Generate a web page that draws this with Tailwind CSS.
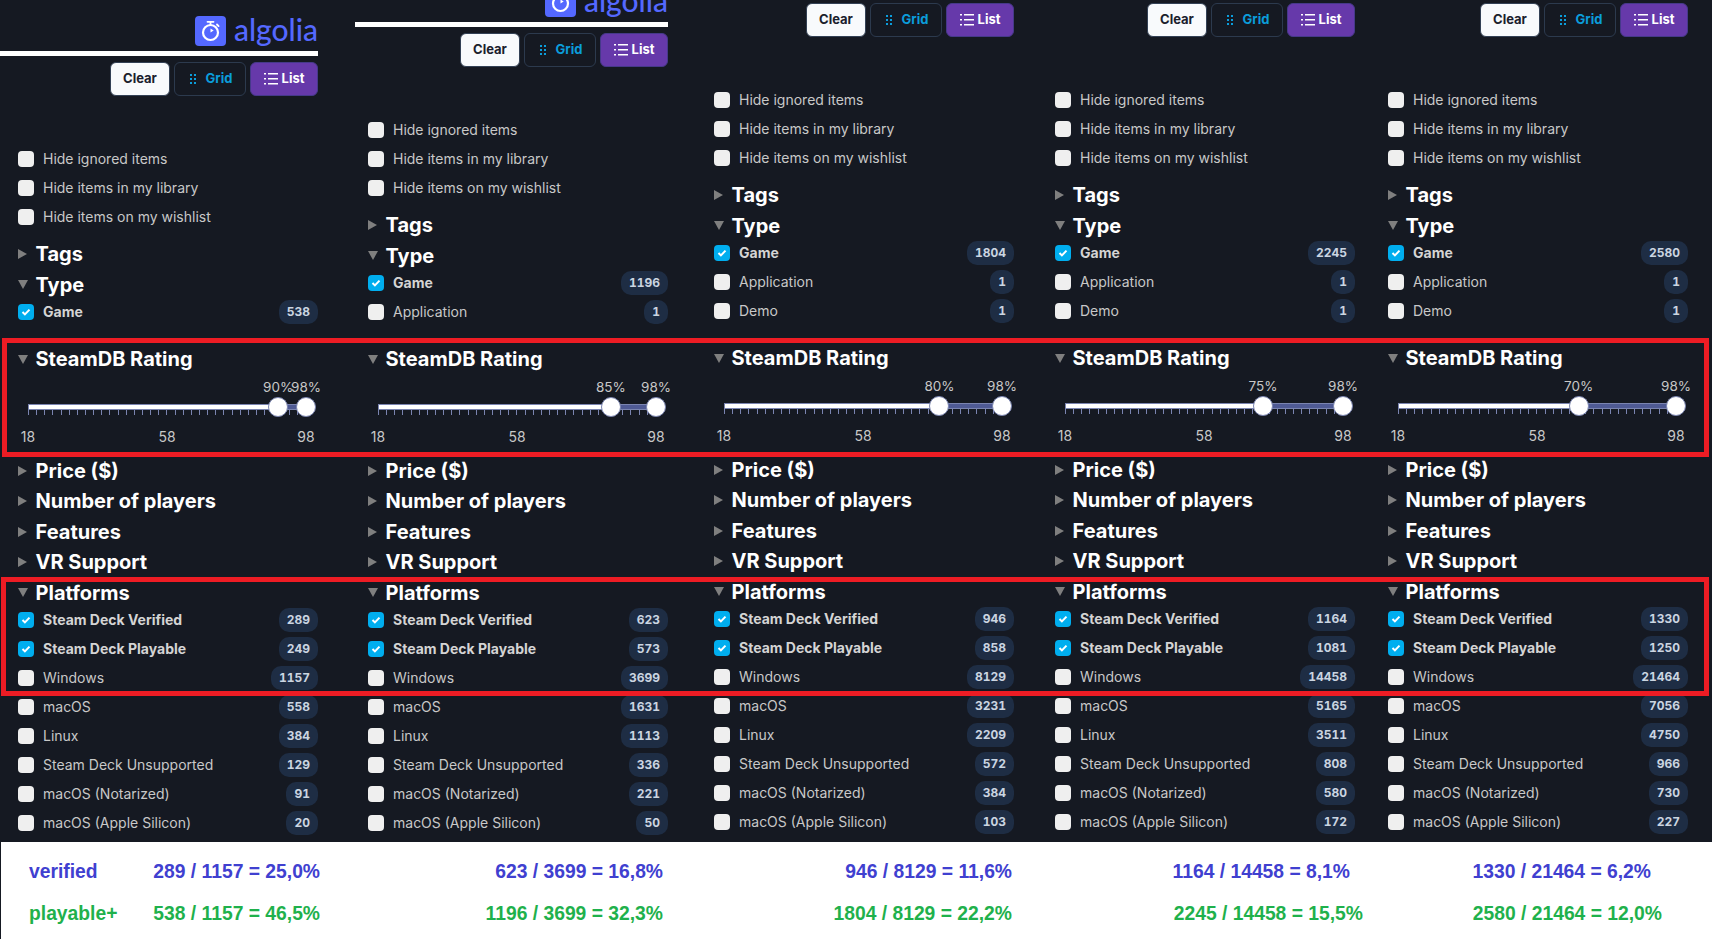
<!DOCTYPE html>
<html lang="en">
<head>
    <meta charset="UTF-8">
    <title>SteamDB filters</title>
    <script src="https://cdn.jsdelivr.net/npm/@tailwindcss/browser@4"></script>
</head>
<body class="bg-[#151922] [font-family:Inter,sans-serif]">
    <div class="relative w-[1712px] h-[939px] overflow-hidden bg-[#151922]">
        <!-- the five filter panels -->
        <main id="columns" class="flex items-start h-[842px] overflow-hidden"></main>

        <!-- totals -->
        <section class="h-[97px] ml-px pt-[19px] bg-white text-[19.3px] font-bold [font-family:'Liberation_Sans',sans-serif]">
            <div class="flex h-[22px] items-center text-[#4040d0]">
                <div class="w-[319px] pl-[28px] flex justify-between"><span>verified</span><span>289 / 1157 = 25,0%</span></div>
                <div class="w-[343px] text-right">623 / 3699 = 16,8%</div>
                <div class="w-[349px] text-right">946 / 8129 = 11,6%</div>
                <div class="w-[338px] text-right">1164 / 14458 = 8,1%</div>
                <div class="w-[301px] text-right">1330 / 21464 = 6,2%</div>
            </div>
            <div class="flex h-[22px] mt-5 items-center text-[#1fb14c]">
                <div class="w-[319px] pl-[28px] flex justify-between"><span>playable+</span><span>538 / 1157 = 46,5%</span></div>
                <div class="w-[343px] text-right">1196 / 3699 = 32,3%</div>
                <div class="w-[349px] text-right">1804 / 8129 = 22,2%</div>
                <div class="w-[351px] text-right">2245 / 14458 = 15,5%</div>
                <div class="w-[299px] text-right">2580 / 21464 = 12,0%</div>
            </div>
        </section>

        <!-- red highlight boxes -->
        <div class="absolute left-[2px] top-[338px] w-[1707px] h-[119px] border-[5px] border-[#ed1c24]"></div>
        <div class="absolute left-px top-[577px] w-[1708px] h-[119px] border-[5px] border-[#ed1c24]"></div>
    </div>

    <script>
        const columns = [
            { box: 'ml-[18px] mt-[16px]', logo: true, bar: '-ml-[18px]', type: [538], low: 90, platforms: [289, 249, 1157, 558, 384, 129, 91, 20] },
            { box: 'ml-[50px] -mt-[13px]', logo: true, bar: '-ml-[13px]', type: [1196, 1], low: 85, platforms: [623, 573, 3699, 1631, 1113, 336, 221, 50] },
            { box: 'ml-[46px] -mt-[3px]', type: [1804, 1, 1], low: 80, platforms: [946, 858, 8129, 3231, 2209, 572, 384, 103] },
            { box: 'ml-[41px] -mt-[3px]', type: [2245, 1, 1], low: 75, platforms: [1164, 1081, 14458, 5165, 3511, 808, 580, 172] },
            { box: 'ml-[33px] -mt-[3px]', type: [2580, 1, 1], low: 70, platforms: [1330, 1250, 21464, 7056, 4750, 966, 730, 227] }
        ];

        const typeNames = ['Game', 'Application', 'Demo'];
        const platformNames = ['Steam Deck Verified', 'Steam Deck Playable', 'Windows', 'macOS', 'Linux', 'Steam Deck Unsupported', 'macOS (Notarized)', 'macOS (Apple Silicon)'];

        const logo = (bar) => `
            <div class="flex justify-end items-center gap-2 h-[30px]">
                <svg class="w-[31px] h-[30px]" viewBox="0 0 31 30">
                    <rect width="31" height="30" rx="4" fill="#5468ff"/>
                    <circle cx="15.5" cy="16.5" r="7.5" fill="none" stroke="#fff" stroke-width="2.2"/>
                    <path d="M12.5 5.8h6M15.5 5.8v3M22 8.5l1.6 1.6" fill="none" stroke="#fff" stroke-width="1.8" stroke-linecap="round"/>
                    <path d="M15.5 12.5v4l3.2-2z" fill="#fff"/>
                </svg>
                <span class="text-[#5468ff] text-[30px] font-medium leading-[26px] pb-[4px] [font-family:Lato,sans-serif]">algolia</span>
            </div>
            <div class="h-[5px] mt-[5px] bg-white ${bar}"></div>`;

        const buttons = `
            <div class="flex justify-end gap-1 h-[34px] mt-[6px] text-[13px] font-bold">
                <button class="w-[60px] rounded-md border border-[#334155] bg-[#f8fafc] text-[#1a202c]">Clear</button>
                <button class="w-[72px] rounded-md border border-[#2c3a4e] text-[#0b9ddb] flex items-center justify-center gap-[9.4px] pl-[2.6px]">
                    <svg class="w-[6px] h-[10px]" viewBox="0 0 6 10" fill="#0b9ddb"><rect width="2" height="2"/><rect x="4" width="2" height="2"/><rect y="4" width="2" height="2"/><rect x="4" y="4" width="2" height="2"/><rect y="8" width="2" height="2"/><rect x="4" y="8" width="2" height="2"/></svg>
                    Grid
                </button>
                <button class="w-[68px] rounded-md border border-[#46398a] bg-[#6639aa] text-white flex items-center justify-center gap-1">
                    <svg class="w-[14px] h-[12px]" viewBox="0 0 14 12" fill="#fff"><rect y="0" width="2" height="1.5"/><rect y="5" width="2" height="1.5"/><rect y="10" width="2" height="1.5"/><rect x="4" y="0" width="10" height="1.5"/><rect x="4" y="5" width="10" height="1.5"/><rect x="4" y="10" width="10" height="1.5"/></svg>
                    List
                </button>
            </div>`;

        function heading(title, open) {
            const marker = open
                ? '<svg class="w-[10px] h-[9px]" viewBox="0 0 10 9"><path d="M0 0h10L5 9z" fill="#7f7f7f"/></svg>'
                : '<svg class="w-[10px] h-[10px]" viewBox="0 0 10 10"><path d="M0 0l9 5-9 5z" fill="#7f7f7f"/></svg>';
            return `<div class="flex items-center h-[30.5px]"><span class="w-[17.5px] shrink-0">${marker}</span><span class="text-xl font-bold text-white">${title}</span></div>`;
        }

        function row(label, checked, count) {
            const box = checked
                ? '<span class="w-4 h-4 rounded-[4px] bg-[#00aeef] flex items-center justify-center"><svg class="w-[10px] h-[8px]" viewBox="0 0 10 8"><path d="M1.5 4l2.4 2.4L8.5 1.6" fill="none" stroke="#fff" stroke-width="2"/></svg></span>'
                : '<span class="w-4 h-4 rounded-[4px] bg-[#efefef]"></span>';
            const badge = count === undefined ? '' :
                `<span class="ml-auto h-6 px-2 rounded-[10px] bg-[#1e2d44] text-[#cbd5e1] text-xs font-bold tabular-nums flex items-center">${count}</span>`;
            return `<div class="flex items-center h-[29px]">${box}<span class="ml-[9px] text-sm ${checked ? 'font-bold text-[#d4d4d4]' : 'text-[#c8c8c8]'}">${label}</span>${badge}</div>`;
        }

        function slider(low) {
            const pos = (v) => (v - 18) / 80 * 278;
            const ticks = Array.from({ length: 35 }, () => '<span class="w-px h-[5px] bg-[#7a84b0]"></span>').join('');
            const thumb = (v) => `<span class="absolute top-[22px] w-5 h-5 -ml-[10px] rounded-full bg-white border border-[#7a84b0]" style="left:${pos(v)}px"></span>`;
            const pct = (v) => `<span class="absolute top-0 -translate-x-1/2 text-[13.5px] leading-[24px] text-[#c8c8c8]" style="left:${pos(v)}px">${v}%</span>`;
            const scale = (v) => `<span class="absolute top-[50px] -translate-x-1/2 text-sm leading-[24px] text-[#c8c8c8]" style="left:${pos(v)}px">${v}</span>`;
            return `<div class="relative h-[81px] ml-[10px] w-[278px]">
                ${pct(low)}${pct(98)}
                <div class="absolute left-0 top-[29px] w-full h-[6px] border border-[#7a84b0] bg-[#4f5a94]">
                    <div class="h-full bg-white" style="width:${pos(low)}px"></div>
                </div>
                <div class="absolute left-0 top-[35px] w-full flex justify-between">${ticks}</div>
                ${thumb(low)}${thumb(98)}
                ${scale(18)}${scale(58)}${scale(98)}
            </div>`;
        }

        document.getElementById('columns').innerHTML = columns.map((col) => `
            <div class="w-[300px] shrink-0 ${col.box}">
                ${col.logo ? logo(col.bar) : ''}
                ${buttons}
                <div class="mt-[48px]">
                    ${row('Hide ignored items')}
                    ${row('Hide items in my library')}
                    ${row('Hide items on my wishlist')}
                </div>
                <div class="mt-2">${heading('Tags')}${heading('Type', true)}</div>
                <div class="-mt-[3px]">${col.type.map((count, i) => row(typeNames[i], i === 0, count)).join('')}</div>
                <div class="mt-[18px]">${heading('SteamDB Rating', true)}</div>
                ${slider(col.low)}
                ${heading('Price ($)')}${heading('Number of players')}${heading('Features')}${heading('VR Support')}${heading('Platforms', true)}
                <div class="-mt-[3px]">${col.platforms.map((count, i) => row(platformNames[i], i < 2, count)).join('')}</div>
            </div>`).join('');
    </script>
</body>
</html>
